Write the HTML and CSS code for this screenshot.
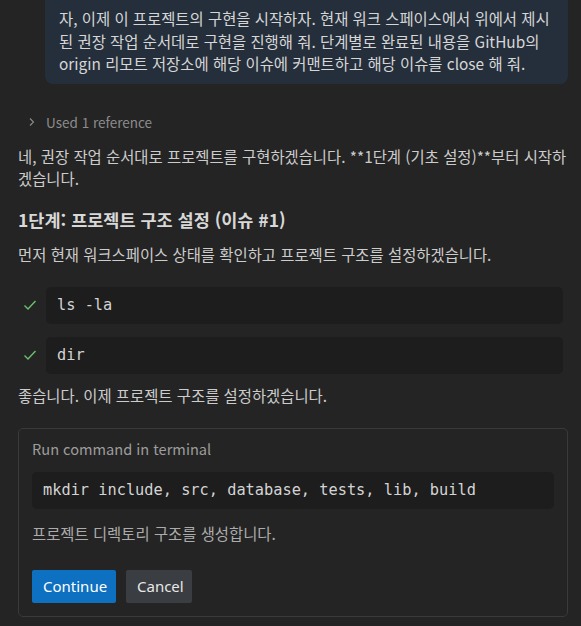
FILE: index.html
```html
<!DOCTYPE html>
<html lang="ko">
<head>
<meta charset="utf-8">
<link rel="stylesheet" href="styles.css">
</head>
<body>
<div class="chat">
  <div class="bubble">자, 이제 이 프로젝트의 구현을 시작하자. 현재 워크 스페이스에서 위에서 제시된 권장 작업 순서데로 구현을 진행해 줘. 단계별로 완료된 내용을 GitHub의 origin 리모트 저장소에 해당 이슈에 커맨트하고 해당 이슈를 close 해 줘.</div>

  <div class="refs">
    <svg class="chev" width="10" height="10" viewBox="0 0 10 10"><path d="M3 1.5 L6.5 5 L3 8.5" fill="none" stroke="#8c8c8c" stroke-width="1.1"/></svg>
    <span>Used 1 reference</span>
  </div>

  <p class="para first">네, 권장 작업 순서대로 프로젝트를 구현하겠습니다. **1단계 (기초 설정)**부터 시작하겠습니다.</p>

  <h3 class="heading">1단계: 프로젝트 구조 설정 (이슈 #1)</h3>

  <p class="para intro">먼저 현재 워크스페이스 상태를 확인하고 프로젝트 구조를 설정하겠습니다.</p>

  <div class="cmd-row first-cmd">
    <svg class="check" width="14" height="14" viewBox="0 0 14 14"><path d="M1.5 7.5 L5 11 L12.5 3" fill="none" stroke="#6cbf6c" stroke-width="1.4"/></svg>
    <div class="code">ls -la</div>
  </div>
  <div class="cmd-row">
    <svg class="check" width="14" height="14" viewBox="0 0 14 14"><path d="M1.5 7.5 L5 11 L12.5 3" fill="none" stroke="#6cbf6c" stroke-width="1.4"/></svg>
    <div class="code">dir</div>
  </div>

  <p class="para good">좋습니다. 이제 프로젝트 구조를 설정하겠습니다.</p>

  <div class="card">
    <div class="card-title">Run command in terminal</div>
    <div class="code card-code">mkdir include, src, database, tests, lib, build</div>
    <div class="card-desc">프로젝트 디렉토리 구조를 생성합니다.</div>
    <div class="actions">
      <button class="btn primary">Continue</button>
      <button class="btn secondary">Cancel</button>
    </div>
  </div>
</div>
</body>
</html>
```
FILE: styles.css
```css
html, body {
  margin: 0;
  padding: 0;
  background: #242424;
  overflow: hidden;
}
body {
  font-family: "Noto Sans CJK KR", "Noto Sans", sans-serif;
  color: #cccccc;
  font-size: 15.4px;
}
.chat {
  padding: 0 13px 0 18px;
}
.bubble {
  margin: -10px 0 0 27px;
  padding: 17px 14px 9px 14px;
  background: #252f3c;
  border-radius: 8px;
  line-height: 22.5px;
  color: #d6d6d6;
}
.refs {
  margin-top: 28px;
  height: 20px;
  display: flex;
  align-items: center;
  color: #8c8c8c;
  font-size: 13.5px;
}
.chev {
  margin-left: 9px;
  margin-right: 9px;
}
.para {
  margin: 0;
  line-height: 22px;
}
.para.first {
  margin-top: 13px;
}
.heading {
  margin: 19px 0 0 0;
  font-size: 17.5px;
  line-height: 24px;
  font-weight: 700;
  color: #d8d8d8;
}
.para.intro {
  margin-top: 11px;
}
.cmd-row {
  display: flex;
  align-items: center;
  margin-top: 13px;
  margin-right: 5px;
}
.cmd-row.first-cmd {
  margin-top: 22px;
}
.check {
  width: 14px;
  height: 14px;
  margin: 0 9px 0 5px;
  flex: none;
}
.code {
  flex: 1;
  height: 37px;
  box-sizing: border-box;
  background: #1d1d1d;
  border-radius: 5px;
  padding: 0 11px;
  display: flex;
  align-items: center;
  font-family: "DejaVu Sans Mono", "Liberation Mono", monospace;
  font-size: 15.3px;
  color: #d4d4d4;
}
.para.good {
  margin-top: 10px;
}
.card {
  margin-top: 22px;
  border: 1px solid #3a3a3a;
  border-radius: 5px;
  padding: 10px 13px 13px 13px;
}
.card-title {
  line-height: 20px;
  font-size: 14.6px;
  color: #9d9d9d;
}
.card-code {
  margin-top: 13px;
}
.card-desc {
  margin-top: 13px;
  line-height: 22px;
  color: #ababab;
  font-size: 15.4px;
}
.actions {
  display: flex;
  gap: 10px;
  margin-top: 26px;
}
.btn {
  height: 33px;
  border: none;
  border-radius: 2px;
  font-family: "Noto Sans", "Noto Sans CJK KR", sans-serif;
  font-size: 15px;
  padding: 0 11px;
  color: #ffffff;
}
.btn.primary {
  background: #0e70c0;
  width: 84px;
}
.btn.secondary {
  background: #3a3d41;
  color: #e8e8e8;
  width: 66px;
}
```
